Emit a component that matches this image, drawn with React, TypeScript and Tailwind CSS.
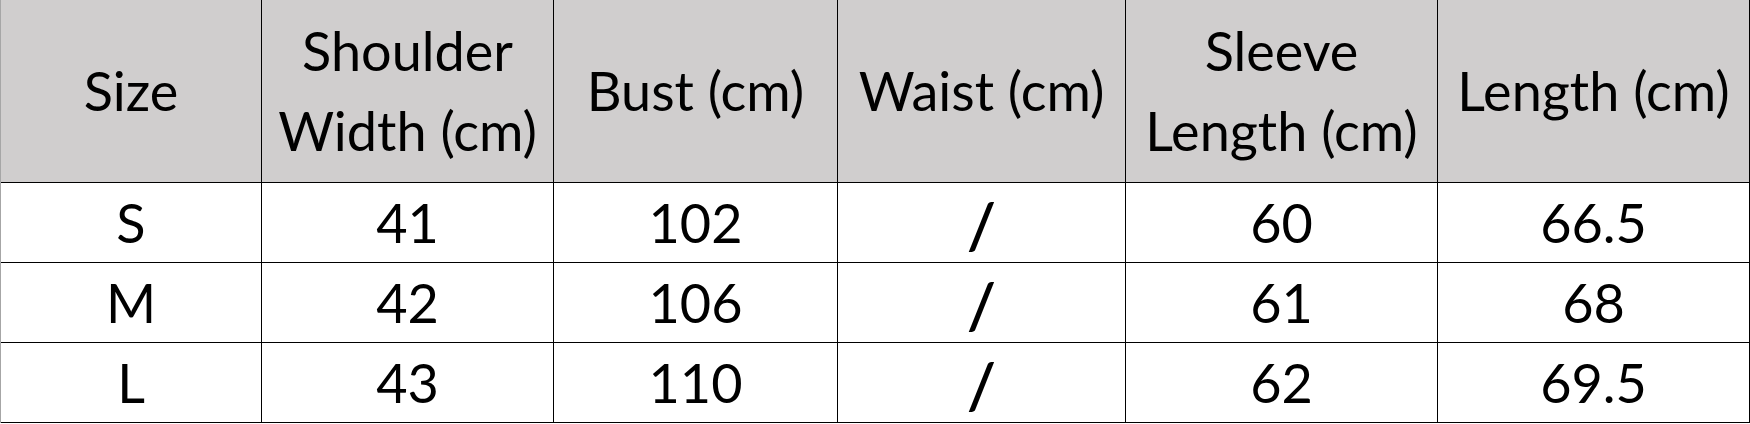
const columns = [
  { label: ["Size"], width: "w-[261px]" },
  { label: ["Shoulder", "Width (cm)"], width: "w-[292px]" },
  { label: ["Bust (cm)"], width: "w-[284px]" },
  { label: ["Waist (cm)"], width: "w-[288px]" },
  { label: ["Sleeve", "Length (cm)"], width: "w-[312px]" },
  { label: ["Length (cm)"], width: "w-[312px]" },
]

const rows = [
  ["S", "41", "102", "/", "60", "66.5"],
  ["M", "42", "106", "/", "61", "68"],
  ["L", "43", "110", "/", "62", "69.5"],
]

export default function App() {
  return (
    <div
      className="w-[1750px] h-[424px] bg-white text-black text-[54px] overflow-hidden"
      style={{ fontFamily: "Lato, 'Open Sans', sans-serif" }}
    >
      <div className="border-l border-l-[#a6a6a6]">
        <div className="flex h-[183px] bg-[#d0cece] border-b border-black">
          {columns.map((col, i) => (
            <div
              key={i}
              className={`${col.width} shrink-0 flex flex-col items-center justify-center border-r border-black leading-[80px] text-center whitespace-nowrap`}
            >
              {col.label.map((line) => (
                <span key={line}>{line}</span>
              ))}
            </div>
          ))}
        </div>
        {rows.map((row, r) => (
          <div key={r} className="flex h-[80px] border-b border-black">
            {row.map((cell, i) => (
              <div
                key={i}
                className={`${columns[i].width} shrink-0 flex items-center justify-center border-r border-black leading-none`}
              >
                {cell === "/" ? (
                  <span className="text-[64px] leading-[64px] font-semibold translate-y-[2px]">/</span>
                ) : (
                  cell
                )}
              </div>
            ))}
          </div>
        ))}
      </div>
    </div>
  )
}
